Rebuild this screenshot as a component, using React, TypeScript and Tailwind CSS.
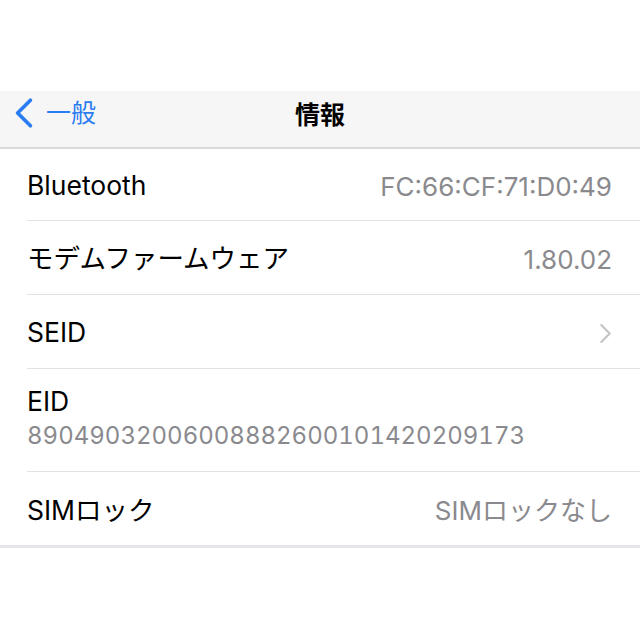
const rows = [
  { label: 'Bluetooth', value: 'FC:66:CF:71:D0:49', h: 'h-[72px]' },
  { label: 'モデムファームウェア', value: '1.80.02', h: 'h-[74px]' },
];

function Chevron({ className, stroke, width }: { className: string; stroke: string; width: number }) {
  return (
    <svg viewBox="0 0 12 20" className={className} fill="none">
      <path d="M10 2 L2 10 L10 18" stroke={stroke} strokeWidth={width} strokeLinecap="round" strokeLinejoin="round" />
    </svg>
  );
}

export default function App() {
  return (
    <div className="w-[640px] h-[640px] bg-white text-black font-['Inter','Noto_Sans_CJK_JP',sans-serif] overflow-hidden">
      <div className="h-[91px]" />

      {/* nav bar */}
      <div className="relative h-[58px] bg-[#f6f6f6] border-b-2 border-[#dadada] flex items-center pb-[12px]">
        <div className="flex items-center pl-[14px] gap-[12px] text-[#2a7cf2]">
          <Chevron className="w-[20px] h-[32px]" stroke="#2a7cf2" width={2.3} />
          <span className="text-[25px] leading-none">一般</span>
        </div>
        <div className="absolute left-0 right-0 top-[8px] text-center text-[25px] font-bold leading-[32px]">情報</div>
      </div>

      {/* list */}
      <div className="border-b-[3px] border-[#e6e6ea]">
        {rows.map(r => (
          <div key={r.label} className="pl-[27px]">
            <div className={`${r.h} flex items-center justify-between pr-[28px] pt-[3px] border-b border-[#e2e2e4]`}>
              <span className="text-[26.5px]">{r.label}</span>
              <span className="text-[26px] text-[#8a8a8e]">{r.value}</span>
            </div>
          </div>
        ))}

        <div className="pl-[27px]">
          <div className="h-[74px] flex items-center justify-between pr-[28px] pt-[3px] border-b border-[#e2e2e4]">
            <span className="text-[26.5px]">SEID</span>
            <Chevron className="w-[13px] h-[21px] rotate-180" stroke="#c4c4c8" width={2} />
          </div>
        </div>

        <div className="pl-[27px]">
          <div className="h-[103px] flex flex-col justify-center pr-[28px] border-b border-[#e2e2e4]">
            <span className="text-[26.5px] leading-[32px]">EID</span>
            <span className="text-[24px] leading-[38px] text-[#8a8a8e] tabular-nums">
              89049032006008882600101420209173
            </span>
          </div>
        </div>

        <div className="pl-[27px]">
          <div className="h-[73px] flex items-center justify-between pr-[28px] pt-[4px]">
            <span className="text-[26.5px]">SIMロック</span>
            <span className="text-[26px] text-[#8a8a8e]">SIMロックなし</span>
          </div>
        </div>
      </div>
    </div>
  );
}
